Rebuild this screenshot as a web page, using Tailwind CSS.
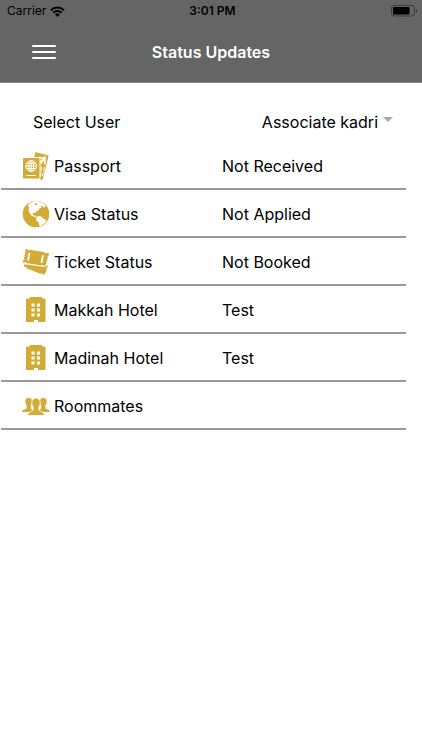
<!DOCTYPE html>
<html lang="en">
<head>
  <meta charset="UTF-8" />
  <meta name="viewport" content="width=device-width, initial-scale=1.0" />
  <title>Status Updates</title>
  <script src="https://cdn.jsdelivr.net/npm/@tailwindcss/browser@4"></script>
</head>
<body class="bg-white min-h-screen font-['Inter','Liberation_Sans',sans-serif] text-black">

  <!-- Header -->
  <header class="bg-[#656565] border-b border-[#8a8a8a]">
    <!-- Status bar -->
    <div class="grid grid-cols-3 items-center h-[22px] pl-[7px] pr-1 text-xs">
      <div class="flex items-center gap-1">
        <span>Carrier</span>
        <svg class="w-[15px] h-[11px]" viewBox="0 0 15 11" fill="none" stroke="#000" stroke-width="2">
          <path d="M1 4.2a9.2 9.2 0 0 1 13 0" />
          <path d="M3.4 6.7a5.8 5.8 0 0 1 8.2 0" />
          <path d="M7.5 11 5.1 8.500a3.400 3.400 0 0 1 4.800 0z" fill="#000" stroke="none" />
        </svg>
      </div>
      <span class="text-center font-semibold">3:01 PM</span>
      <svg class="w-[27px] h-[12px] justify-self-end" viewBox="0 0 27 12">
        <rect x="0.5" y="0.5" width="23" height="10.5" rx="2.5" fill="none" stroke="#3c3c3c" />
        <rect x="2" y="2" width="16.5" height="7.5" rx="1" fill="#000" />
        <path d="M25 4v4c1.6-.6 1.6-3.4 0-4z" fill="#3c3c3c" />
      </svg>
    </div>

    <!-- Title bar -->
    <div class="grid grid-cols-[80px_1fr_80px] items-center h-[60px]">
      <button type="button" aria-label="Menu" class="justify-self-end mr-6">
        <svg class="w-6 h-4" viewBox="0 0 24 16" stroke="#fff" stroke-width="2" stroke-linecap="round">
          <path d="M1 2h22M1 8h22M1 14h22" />
        </svg>
      </button>
      <h1 class="text-center text-base font-semibold text-white">Status Updates</h1>
    </div>
  </header>

  <main class="pt-[18px] pl-px pr-4 text-base">
    <!-- User picker -->
    <div class="flex items-center justify-between h-[41px] pl-8 pr-3">
      <label for="user">Select User</label>
      <div class="relative">
        <select id="user" class="appearance-none bg-transparent pr-4 text-right">
          <option>Associate kadri</option>
        </select>
        <svg class="absolute right-px top-[7px] w-[10px] h-[5px] pointer-events-none" viewBox="0 0 10 5"><path d="M0 0h10L5 5z" fill="#a9a9a9" /></svg>
      </div>
    </div>

    <!-- Status list -->
    <table class="w-full border-separate border-spacing-0 text-left">
      <tbody>
        <tr class="h-12">
          <th scope="row" class="w-[221px] border-b-2 border-[#999] p-0 pt-0.5 pl-[21px] font-normal">
            <div class="flex items-center gap-1">
              <svg class="w-7 h-7" viewBox="0 0 28 28">
                <path d="M13 0.800Q13.300 0 14 .200L26 3.200Q26.700 3.400 26.500 4.200L20.800 27.200Q20.500 28 19.800 27.800L10 25z" fill="#d3ac37" />
                <path d="M19.500 14.500 18.500 24.500M22.600 15 20.500 24" stroke="#fff" stroke-width="1" stroke-dasharray="5 1" />
                <path d="M23.200 4.500c-.7-.4-1.400.2-1.900 1.100l-4-1.100-.7.800 3.500 2-1.300 1.700-1.500-.2-.5.700 1.800.9.900 1.800.7-.4.100-1.400 1.500-1.300.9 3.900 1-.5-.1-4.200c.5-.9.800-3-.4-3.800z" fill="#fff" />
                <rect x="0.500" y="5.500" width="17.500" height="21.500" rx="1.500" fill="#d3ac37" stroke="#fff" />
                <g fill="none" stroke="#fff" stroke-width="1">
                  <circle cx="9.200" cy="14" r="5.300" />
                  <ellipse cx="9.200" cy="14" rx="2.400" ry="5.300" />
                  <path d="M9.200 8.700v10.600M4 14h10.500M4.700 11.500h9M4.700 16.500h9" />
                  <path d="M4.500 23.500h9.500" />
                </g>
              </svg>
              Passport
            </div>
          </th>
          <td class="border-b-2 border-[#999] p-0 pt-0.5">Not Received</td>
        </tr>
        <tr class="h-12">
          <th scope="row" class="border-b-2 border-[#999] p-0 pt-0.5 pl-[21px] font-normal">
            <div class="flex items-center gap-1">
              <svg class="w-7 h-7" viewBox="0 0 28 28">
                <circle cx="14" cy="14" r="13.300" fill="#d3ac37" />
                <path d="M7 3.500 11 1.500 15 .8 17.500 1.800 21 3 23.500 5.500 23.500 7 21.500 7.500 20.500 6 19 6 19.500 8 17.500 8.500 16 10.500 14 11.500 13.500 13 12 12.500 10.500 13.500 11 15 13 15.500 14.500 17 12.500 17 9.500 15.500 7.500 13 6.500 10 7 7.500 6 5.500z" fill="#fff" />
                <path d="M12.500 3.500 14.500 3 15.500 4.500 13.500 5.500z" fill="#d3ac37" />
                <path d="M15 16.500 18 16 20.500 17.500 21.500 19 24.500 20 23.500 22.500 21 24.500 18.500 26.500 17.500 26.500 17 23 14.500 20.500 14 18z" fill="#fff" />
              </svg>
              Visa Status
            </div>
          </th>
          <td class="border-b-2 border-[#999] p-0 pt-0.5">Not Applied</td>
        </tr>
        <tr class="h-12">
          <th scope="row" class="border-b-2 border-[#999] p-0 pt-0.5 pl-[21px] font-normal">
            <div class="flex items-center gap-1">
              <svg class="w-7 h-7" viewBox="0 0 28 28" fill="#d3ac37">
                <path d="M3 16.300 22 19 26 17.500 25.500 19.500 24.500 20 25 21.500 23.800 22.300 24.300 24 22.900 24.700 23.300 26.500 21 26.500 20 25.500 18.500 25.700 5 20.500 4 19 2 18.800 1.800 17.300z" />
                <path d="M3.500 1 5.500 1.300 6.500 2.500 8 1.800 22.500 4.300 23.700 5.500 25 4.800 27 5.200 26.700 7.500 25.400 8.200 26.100 9.800 24.900 10.700 25.600 12.300 24.300 13.200 25 15 23.700 15.900 23.500 18 21.500 17.800 20.500 16.700 19 17.400 4.500 15.100 3.500 14 2 14.700 .8 14.300 1.200 12.200 2.500 11.300 1.800 9.500 3 8.700 2.200 6.800 3.500 6 2.700 4.300 3.500 3.500z" />
                <path d="M7.500 4.800 6 12.500M21 7.200 19.500 15" stroke="#fff" stroke-width="1.800" />
              </svg>
              Ticket Status
            </div>
          </th>
          <td class="border-b-2 border-[#999] p-0 pt-0.5">Not Booked</td>
        </tr>
        <tr class="h-12">
          <th scope="row" class="border-b-2 border-[#999] p-0 pt-0.5 pl-[21px] font-normal">
            <div class="flex items-center gap-1">
              <svg class="w-7 h-7" viewBox="0 0 28 28">
                <path d="M8 1h12v1.500h2.500q1 0 1 1V26h-7.500v-2h-4v2H4V3.500q0-1 1-1h3z" fill="#d3ac37" />
                <path d="M9.500 7.500h3v3h-3zM15 7.500h3v3h-3zM9.500 12.500h3v3h-3zM15 12.500h3v3h-3zM9.500 17.500h3v3h-3zM15 17.500h3v3h-3z" fill="#fff" />
              </svg>
              Makkah Hotel
            </div>
          </th>
          <td class="border-b-2 border-[#999] p-0 pt-0.5">Test</td>
        </tr>
        <tr class="h-12">
          <th scope="row" class="border-b-2 border-[#999] p-0 pt-0.5 pl-[21px] font-normal">
            <div class="flex items-center gap-1">
              <svg class="w-7 h-7" viewBox="0 0 28 28">
                <path d="M8 1h12v1.500h2.500q1 0 1 1V26h-7.500v-2h-4v2H4V3.500q0-1 1-1h3z" fill="#d3ac37" />
                <path d="M9.500 7.500h3v3h-3zM15 7.500h3v3h-3zM9.500 12.500h3v3h-3zM15 12.500h3v3h-3zM9.500 17.500h3v3h-3zM15 17.500h3v3h-3z" fill="#fff" />
              </svg>
              Madinah Hotel
            </div>
          </th>
          <td class="border-b-2 border-[#999] p-0 pt-0.5">Test</td>
        </tr>
        <tr class="h-12">
          <th scope="row" class="border-b-2 border-[#999] p-0 pt-0.5 pl-[21px] font-normal">
            <div class="flex items-center gap-1">
              <svg class="w-7 h-7" viewBox="0 0 28 28" fill="#d3ac37">
                <path d="M3.300 9C3.300 4.500 10 4.500 10 9 10 11.500 9.300 12.800 8.800 13.500V16C9 17.500 12 17.500 12 20H0C0 17 4.500 17.500 4.700 16V13.500C4 12.800 3.300 11.500 3.300 9z" />
                <path d="M24.700 9C24.700 4.500 18 4.500 18 9 18 11.500 18.700 12.800 19.200 13.500V16C19 17.500 16 17.500 16 20H28C28 17 23.500 17.500 23.300 16V13.500C24 12.800 24.700 11.500 24.700 9z" />
                <path d="M9.800 10.500C9.800 4.500 18.200 4.500 18.200 10.500 18.200 13 17.300 14.500 16.700 15.300V17.500C17 19.500 22.500 19.500 22.500 23.500H5.500C5.500 19.500 11 19.500 11.300 17.500V15.300C10.700 14.500 9.800 13 9.800 10.500z" stroke="#fff" stroke-width=".8" />
              </svg>
              Roommates
            </div>
          </th>
          <td class="border-b-2 border-[#999] p-0 pt-0.5"></td>
        </tr>
      </tbody>
    </table>
  </main>

</body>
</html>
